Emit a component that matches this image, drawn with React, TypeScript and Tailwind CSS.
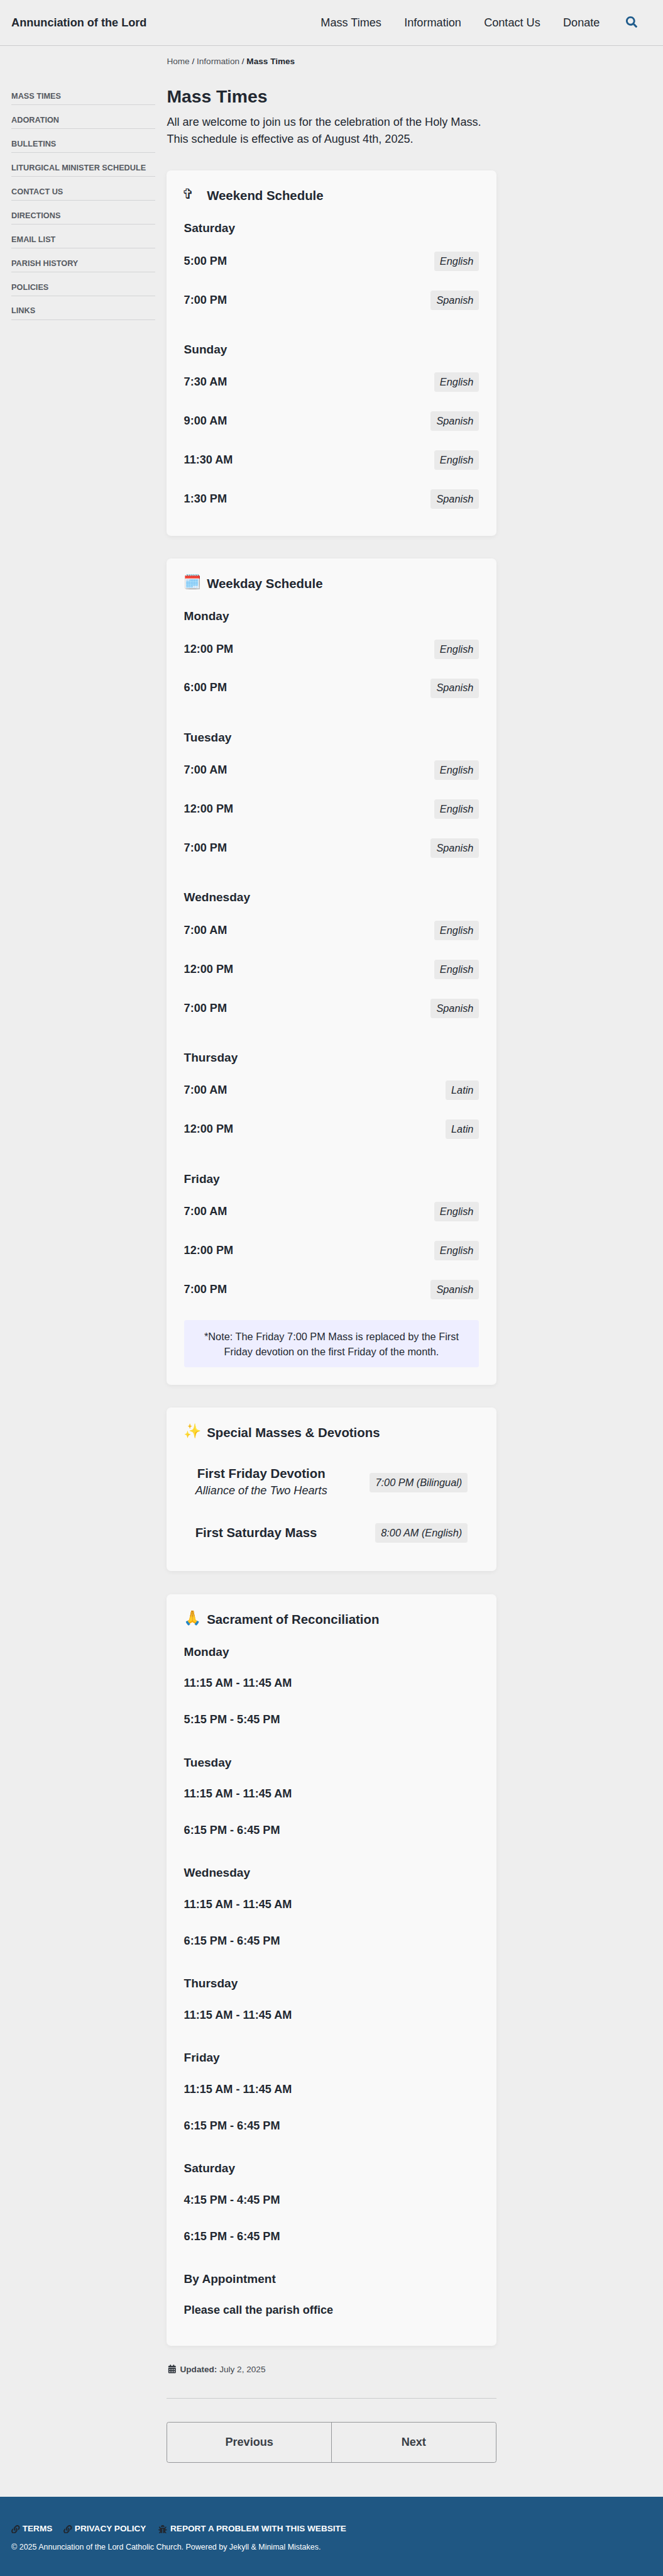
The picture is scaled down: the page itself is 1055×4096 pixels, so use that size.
import type { ReactNode } from "react";
import { FaBug, FaCalendarAlt, FaLink, FaSearch } from "react-icons/fa";

type Row = { time: string; tag?: string };
type Day = { name: string; rows: Row[] };

const nav = ["Mass Times", "Information", "Contact Us", "Donate"];

const sideLinks = [
  "Mass Times",
  "Adoration",
  "Bulletins",
  "Liturgical Minister Schedule",
  "Contact Us",
  "Directions",
  "Email List",
  "Parish History",
  "Policies",
  "Links",
];

const en = (time: string): Row => ({ time, tag: "English" });
const es = (time: string): Row => ({ time, tag: "Spanish" });
const la = (time: string): Row => ({ time, tag: "Latin" });
const plain = (time: string): Row => ({ time });

const weekend: Day[] = [
  { name: "Saturday", rows: [en("5:00 PM"), es("7:00 PM")] },
  { name: "Sunday", rows: [en("7:30 AM"), es("9:00 AM"), en("11:30 AM"), es("1:30 PM")] },
];

const weekday: Day[] = [
  { name: "Monday", rows: [en("12:00 PM"), es("6:00 PM")] },
  { name: "Tuesday", rows: [en("7:00 AM"), en("12:00 PM"), es("7:00 PM")] },
  { name: "Wednesday", rows: [en("7:00 AM"), en("12:00 PM"), es("7:00 PM")] },
  { name: "Thursday", rows: [la("7:00 AM"), la("12:00 PM")] },
  { name: "Friday", rows: [en("7:00 AM"), en("12:00 PM"), es("7:00 PM")] },
];

const lateMorning = plain("11:15 AM - 11:45 AM");
const evening = plain("6:15 PM - 6:45 PM");

const reconciliation: Day[] = [
  { name: "Monday", rows: [lateMorning, plain("5:15 PM - 5:45 PM")] },
  { name: "Tuesday", rows: [lateMorning, evening] },
  { name: "Wednesday", rows: [lateMorning, evening] },
  { name: "Thursday", rows: [lateMorning] },
  { name: "Friday", rows: [lateMorning, evening] },
  { name: "Saturday", rows: [plain("4:15 PM - 4:45 PM"), evening] },
  { name: "By Appointment", rows: [plain("Please call the parish office")] },
];

function Tag({ children }: { children: ReactNode }) {
  return (
    <span className="flex h-[31px] items-center rounded-[3.5px] bg-[#eaeaea] px-[9px] text-[16.32px] whitespace-nowrap italic">
      {children}
    </span>
  );
}

function Card({ icon, title, children }: { icon: ReactNode; title: string; children: ReactNode }) {
  return (
    <section className="mb-[36.3px] rounded-[7px] bg-[#f9f9f9] p-[27.2px] shadow-[0_2px_7px_rgba(0,0,0,0.05)]">
      <h2 className="flex h-[26.2px] items-baseline text-[20.4px] leading-[25.4px] font-bold">
        <span className="w-[36.6px] shrink-0 -translate-y-[2.2px] font-['Liberation_Sans','DejaVu_Sans','Noto_Color_Emoji',sans-serif] text-[22.66px] font-normal">
          {icon}
        </span>
        {title}
      </h2>
      {children}
    </section>
  );
}

function MassDays({ days }: { days: Day[] }) {
  return (
    <div className="mt-[24.7px] flex flex-col gap-[33.8px]">
      {days.map((day) => (
        <div key={day.name}>
          <h3 className="mb-[7.9px] text-[19.04px] leading-[27.2px] font-bold">{day.name}</h3>
          <ul>
            {day.rows.map((row) => (
              <li key={row.time} className="flex h-[61.9px] items-center justify-between">
                <span className="font-bold">{row.time}</span>
                <Tag>{row.tag}</Tag>
              </li>
            ))}
          </ul>
        </div>
      ))}
    </div>
  );
}

function ConfessionDays({ days }: { days: Day[] }) {
  return (
    <div className="mt-[24.7px] flex flex-col gap-[24.8px]">
      {days.map((day) => (
        <div key={day.name}>
          <h3 className="mb-[7.9px] text-[19.04px] leading-[27.2px] font-bold">{day.name}</h3>
          <ul>
            {day.rows.map((row) => (
              <li key={row.time} className="flex h-[58px] items-center font-bold">
                {row.time}
              </li>
            ))}
          </ul>
        </div>
      ))}
    </div>
  );
}

export default function App() {
  return (
    <div className="flex min-h-[4096px] flex-col bg-[#eeeeee] font-['Liberation_Sans',Arial,sans-serif] text-[18.13px] leading-[27.2px] text-[#222831]">
      <header className="flex h-[73px] items-center border-b border-[#cbcccd] pt-[2px] pr-[41px] pl-[18.1px]">
        <a className="mr-auto font-bold">Annunciation of the Lord</a>
        <nav className="flex gap-[36.3px]">
          {nav.map((item) => (
            <a key={item}>{item}</a>
          ))}
        </nav>
        <FaSearch className="ml-[41.5px] size-[18.1px] -translate-y-[2px] text-[#1f5c8c]" />
      </header>

      <nav className="mt-[14.8px] ml-[265.4px] text-[13.6px] leading-[20.4px]">
        <span className="text-[#4a4f56]">Home</span> / <span className="text-[#4a4f56]">Information</span> /{" "}
        <strong>Mass Times</strong>
      </nav>

      <div className="flex gap-[18.1px] pl-[18.1px]">
        <aside className="mt-[21.3px] w-[229.2px] shrink-0 opacity-75">
          <ul>
            {sideLinks.map((link) => (
              <li
                key={link}
                className="flex h-[37.92px] items-end border-b border-[#cbcccd] pb-[3.1px] text-[12.69px] leading-[19px] font-bold uppercase"
              >
                {link}
              </li>
            ))}
          </ul>
        </aside>

        <main className="w-[524.2px]">
          <h1 className="mt-[28px] text-[28.34px] leading-[34px] font-bold">Mass Times</h1>
          <p className="mt-[10.5px] mb-[36.1px]">
            All are welcome to join us for the celebration of the Holy Mass.
            <br />
            This schedule is effective as of August 4th, 2025.
          </p>

          <Card icon={<span className="-ml-[3px]">✞</span>} title="Weekend Schedule">
            <MassDays days={weekend} />
          </Card>

          <Card icon="🗓️" title="Weekday Schedule">
            <MassDays days={weekday} />
            <p className="mt-[18.1px] rounded-[3.5px] bg-[#eeeeff] px-[18px] pt-[13.4px] pb-[12.8px] text-center text-[16.32px] leading-[24.4px]">
              *Note: The Friday 7:00 PM Mass is replaced by the First Friday devotion on the first Friday of the month.
            </p>
          </Card>

          <Card icon="✨" title="Special Masses & Devotions">
            <div className="mt-[20.7px] flex items-center justify-between p-[18.1px]">
              <div className="text-center">
                <h3 className="text-[20.4px] font-bold">First Friday Devotion</h3>
                <p className="italic">Alliance of the Two Hearts</p>
              </div>
              <Tag>7:00 PM (Bilingual)</Tag>
            </div>
            <div className="mt-[1.3px] flex items-center justify-between p-[18.1px]">
              <h3 className="text-[20.4px] font-bold">First Saturday Mass</h3>
              <Tag>8:00 AM (English)</Tag>
            </div>
          </Card>

          <Card icon="🙏" title="Sacrament of Reconciliation">
            <ConfessionDays days={reconciliation} />
          </Card>

          <p className="mt-[-9px] flex items-center pl-[1.5px] text-[13.6px] leading-[20.4px] text-[#43484f]">
            <FaCalendarAlt className="mr-[5.5px] ml-[0.5px] size-[13.6px] -translate-y-[1px] text-[#2f353d]" />
            <strong className="mr-[3.8px]">Updated:</strong> July 2, 2025
          </p>

          <div className="mt-[35.5px] border-t border-[#cbcccd]" />

          <nav className="mt-[36.3px] flex h-[65px] rounded-[3.5px] border border-[#95979a] font-bold text-[#393e46]">
            <a className="flex flex-1 items-center justify-center border-r border-[#95979a]">Previous</a>
            <a className="flex flex-1 items-center justify-center">Next</a>
          </nav>
        </main>
      </div>

      <footer className="mt-auto h-[126.2px] bg-[#1f5783] pt-[41.6px] pl-[18.1px] text-white">
        <ul className="flex text-[13.6px] leading-[20.4px] font-bold uppercase">
          <li className="mr-[18px] flex items-center">
            <FaLink className="mr-[4px] size-[13.6px] text-[#222831]" />
            Terms
          </li>
          <li className="mr-[18px] flex items-center">
            <FaLink className="mr-[4px] size-[13.6px] text-[#222831]" />
            Privacy Policy
          </li>
          <li className="flex items-center">
            <FaBug className="mr-[5.5px] ml-[1.5px] size-[13.6px] text-[#222831]" />
            Report a problem with this website
          </li>
        </ul>
        <p className="mt-[9.4px] text-[12.47px] leading-[18.7px]">
          © 2025 Annunciation of the Lord Catholic Church. Powered by Jekyll & Minimal Mistakes.
        </p>
      </footer>
    </div>
  );
}
